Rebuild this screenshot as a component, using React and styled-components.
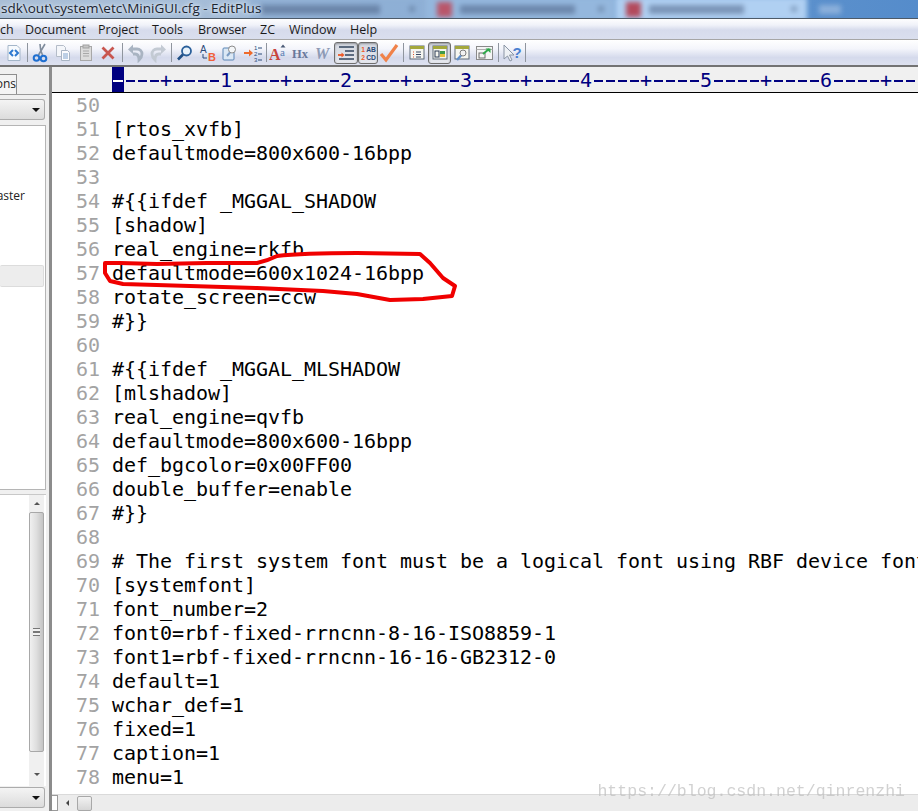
import React from "react";
import styled, { createGlobalStyle } from "styled-components";

const GlobalStyle = createGlobalStyle`
  html, body {
    margin: 0;
    padding: 0;
    background: #fff;
  }
`;

const Window = styled.div`
  position: relative;
  width: 918px;
  height: 811px;
  overflow: hidden;
  display: flex;
  flex-direction: column;
  font-family: "Open Sans", "Noto Sans", sans-serif;
`;

const TitleBar = styled.div`
  position: relative;
  height: 18px;
  flex: none;
  overflow: hidden;
  display: flex;
  background: linear-gradient(90deg, #a9bed6 0%, #a4bcd8 25%, #8fb3dc 60%, #5b90cc 88%, #558ccb 100%);
  border-bottom: 1px solid #4d5a68;
`;

const BlurTabs = styled.div`
  flex: 1;
  display: flex;
  align-items: center;
  padding-left: 250px;
  gap: 2px;
  filter: blur(2.4px);
`;

const BlurTab = styled.div`
  width: ${p => p.$w}px;
  height: 24px;
  flex: none;
  display: flex;
  align-items: center;
  gap: 8px;
  padding: 0 10px;
  box-sizing: border-box;
  background: ${p => p.$bg};
`;

const BlurFav = styled.div`
  width: 15px;
  height: 15px;
  flex: none;
  background: ${p => p.$c};
`;

const BlurText = styled.div`
  height: 9px;
  width: ${p => p.$w}px;
  flex: none;
  background: ${p => p.$c || "rgba(70, 90, 125, 0.5)"};
`;

const BlurClose = styled.div`
  width: 6px;
  height: 6px;
  flex: none;
  margin-left: auto;
  background: rgba(70, 90, 125, 0.4);
`;

const TitleText = styled.div`
  position: absolute;
  left: 1px;
  top: -1px;
  font-size: 13.5px;
  line-height: 18px;
  color: #1b2430;
  white-space: nowrap;
  text-shadow: 0 0 6px #e8f0f8, 0 0 3px #e8f0f8;
`;

const MenuBar = styled.div`
  height: 19px;
  flex: none;
  display: flex;
  align-items: center;
  background: linear-gradient(#fdfdfe 0%, #f0f2f9 30%, #d6dbec 55%, #dadfee 100%);
  border-bottom: 1px solid #a6a6a6;
  font-size: 12.5px;
  color: #1a1a1a;
  padding-top: 1px;
`;

const MenuItem = styled.span`
  width: ${p => p.$w}px;
  flex: none;
  white-space: nowrap;
`;

const Toolbar = styled.div`
  height: 25px;
  flex: none;
  display: flex;
  align-items: center;
  padding-left: 3px;
  background: linear-gradient(#ffffff 0%, #f4f5fb 35%, #d5daec 70%, #dde1ef 100%);
  border-bottom: 2px solid #737373;
`;

const ToolBtn = styled.div`
  width: ${p => p.$w || 22}px;
  height: 22px;
  flex: none;
  display: flex;
  align-items: center;
  justify-content: center;
  box-sizing: border-box;
  border-radius: 3px;
  ${p => p.$on && `
    border: 1px solid #6e6e6e;
    background: linear-gradient(#d4d8e0, #e6e8ee);
    box-shadow: inset 0 1px 2px rgba(0, 0, 0, 0.3);
  `}
`;

const ToolSep = styled.div`
  width: ${p => p.$w || 4}px;
  height: 19px;
  flex: none;
  display: flex;
  justify-content: center;
  &::after {
    content: "";
    width: 1px;
    background: #8f959e;
  }
`;

const Workspace = styled.div`
  flex: 1;
  min-height: 0;
  display: flex;
`;

const SidePanel = styled.div`
  width: 46px;
  flex: none;
  display: flex;
  flex-direction: column;
  background: #f0f0f0;
  padding: 7px 0 3px;
  box-sizing: border-box;
`;

const TabStrip = styled.div`
  height: 20px;
  flex: none;
  border-bottom: 1px solid #9a9a9a;
`;

const SideTab = styled.div`
  width: 17px;
  height: 20px;
  box-sizing: border-box;
  overflow: hidden;
  background: #f4f4f4;
  border-right: 1px solid #8e8e8e;
  border-top: 1px solid #8e8e8e;
  font-size: 12px;
  line-height: 17px;
  color: #222;
  display: flex;
  justify-content: flex-end;
`;

const Combo = styled.div`
  height: ${p => p.$h}px;
  flex: none;
  margin-top: ${p => p.$mt}px;
  margin-right: 1px;
  box-sizing: border-box;
  border: 1px solid #acacac;
  border-left: none;
  border-radius: 0 3px 3px 0;
  background: linear-gradient(#f4f4f4, #dcdcdc);
  display: flex;
  align-items: center;
  justify-content: flex-end;
  padding-right: 4px;
  &::after {
    content: "";
    border-left: 4px solid transparent;
    border-right: 4px solid transparent;
    border-top: 4px solid #111;
  }
`;

const ListPane = styled.div`
  height: 365px;
  flex: none;
  margin-top: 5px;
  background: #fff;
  border: 1px solid #b5b5b5;
  border-left: none;
  box-sizing: border-box;
  padding-top: 62px;
  display: flex;
  flex-direction: column;
`;

const ListText = styled.div`
  height: 18px;
  font-size: 12px;
  line-height: 16px;
  color: #222;
  overflow: hidden;
  display: flex;
  justify-content: flex-end;
  padding-right: 20px;
  white-space: nowrap;
`;

const ListSelected = styled.div`
  height: 20px;
  margin: 59px 1px 0 0;
  background: #ededed;
  border: 1px solid #dcdcdc;
  border-left: none;
  border-radius: 2px;
`;

const TreePane = styled.div`
  flex: 1;
  min-height: 0;
  margin-top: 4px;
  background: #fff;
  display: flex;
  justify-content: flex-end;
  padding-right: 2px;
  border-top: 1px solid #c8c8c8;
`;

const VScroll = styled.div`
  width: 15px;
  display: flex;
  flex-direction: column;
  align-items: center;
  background: #f0f0f0;
`;

const ScrollArrow = styled.div`
  height: 17px;
  flex: none;
  display: flex;
  align-items: center;
  justify-content: center;
  margin-bottom: ${p => (p.$up ? 0 : 3)}px;
  &::after {
    content: "";
    border-left: 3px solid transparent;
    border-right: 3px solid transparent;
    ${p => (p.$up ? "border-bottom: 3px solid #555;" : "border-top: 3px solid #555;")}
  }
`;

const VThumb = styled.div`
  height: 240px;
  flex: none;
  width: 15px;
  box-sizing: border-box;
  border: 1px solid #a8a8a8;
  border-radius: 2px;
  background: linear-gradient(90deg, #f0f0f0, #dedede 50%, #c4c4c4);
  display: flex;
  align-items: center;
  justify-content: center;
  &::after {
    content: "";
    width: 7px;
    height: 6px;
    border-top: 1px solid #777;
    border-bottom: 1px solid #777;
    background: linear-gradient(#f0f0f0 40%, #777 40%, #777 60%, #f0f0f0 60%);
  }
`;

const ScrollTrack = styled.div`
  flex: 1;
`;

const Splitter = styled.div`
  width: 6px;
  flex: none;
  box-sizing: border-box;
  background: #f0f0f0;
  border-right: 3px solid #8c8c8c;
`;

const Main = styled.div`
  flex: 1;
  min-width: 0;
  display: flex;
  flex-direction: column;
`;

const Ruler = styled.div`
  height: 26px;
  flex: none;
  display: flex;
  align-items: center;
  box-sizing: border-box;
  padding-left: 60px;
  background: #f0f0f0;
  border-bottom: 1px solid #000;
  font-family: "DejaVu Sans Mono", monospace;
  font-size: 20px;
  color: #000080;
  white-space: pre;
  overflow: hidden;
`;

const RulerCursor = styled.span`
  width: 12px;
  height: 25px;
  flex: none;
  background: #000080;
  display: flex;
  align-items: center;
  justify-content: center;
  &::after {
    content: "";
    width: 10px;
    height: 2px;
    margin-top: 2px;
    background: #fff;
  }
`;

const RulerCell = styled.span`
  width: 12px;
  flex: none;
  text-align: center;
`;

const RulerDash = styled.span`
  width: 12px;
  height: 2px;
  flex: none;
  margin-top: 2px;
  display: flex;
  justify-content: center;
  &::after {
    content: "";
    width: 9px;
    background: #000080;
  }
`;

const Editor = styled.div`
  position: relative;
  flex: 1;
  min-height: 0;
  overflow: hidden;
  background: #fff;
  font-family: "DejaVu Sans Mono", monospace;
  font-size: 20px;
`;

const Row = styled.div`
  height: 24px;
  display: flex;
  line-height: 24px;
  white-space: pre;
`;

const LineNo = styled.span`
  width: 60px;
  flex: none;
  box-sizing: border-box;
  padding-left: 24px;
  color: #a3a3a3;
`;

const Code = styled.span`
  color: #000;
  letter-spacing: -0.04px;
`;

const Mark = styled.svg`
  position: absolute;
  left: 0;
  top: 0;
  pointer-events: none;
`;

const HScroll = styled.div`
  height: 16px;
  flex: none;
  display: flex;
  align-items: center;
  background: #ececec;
  border-top: 1px solid #dadada;
`;

const HBox = styled.div`
  width: 6px;
  height: 16px;
  flex: none;
  box-sizing: border-box;
  background: #fff;
  border: 1px solid #9a9a9a;
  border-left: none;
`;

const HArrow = styled.div`
  width: 19px;
  flex: none;
  display: flex;
  justify-content: center;
  &::after {
    content: "";
    border-top: 3px solid transparent;
    border-bottom: 3px solid transparent;
    border-right: 3px solid #444;
  }
`;

const HThumb = styled.div`
  width: 15px;
  height: 15px;
  flex: none;
  box-sizing: border-box;
  border: 1px solid #a8a8a8;
  border-radius: 2px;
  background: linear-gradient(#f2f2f2, #d6d6d6);
`;

const Watermark = styled.div`
  position: absolute;
  right: 13px;
  bottom: 9px;
  font-family: "Liberation Mono", monospace;
  font-size: 16.55px;
  line-height: 20px;
  color: rgba(190, 190, 190, 0.7);
  white-space: nowrap;
  filter: blur(0.4px);
`;

const Ico = ({ children }) => (
  <svg width="20" height="20" viewBox="0 0 20 20" fill="none">
    {children}
  </svg>
);

const WinFrame = ({ children }) => (
  <>
    <rect x="3" y="3" width="14" height="13" fill="#f6f6f0" stroke="#5e6a78" />
    <rect x="3" y="3" width="14" height="3" fill="#a4a83c" />
    {children}
  </>
);

const Icons = {
  tags: (
    <Ico>
      <path d="M4 2.500h9l3 3v12H4z" fill="#f7fafd" stroke="#a4b6c9" />
      <path d="M9 7l-3 3 3 3M11 7l3 3-3 3" stroke="#2f7ad0" strokeWidth="2" />
    </Ico>
  ),
  cut: (
    <Ico>
      <path d="M15 1L8.500 12M10 1c0 4 1 8 2.500 11" stroke="#7f8c9c" strokeWidth="1.600" />
      <circle cx="6.500" cy="15" r="2.800" stroke="#1f6fd0" strokeWidth="2" />
      <circle cx="13.500" cy="15.500" r="2.800" stroke="#1f6fd0" strokeWidth="2" />
    </Ico>
  ),
  copy: (
    <Ico>
      <path d="M3.500 2.500h7l2 2v9h-9z" fill="#f4f6fa" stroke="#b4bcc8" />
      <path d="M8.500 7.500h6l2 2v8h-8z" fill="#fbfcfe" stroke="#a9b5c4" />
      <path d="M10 11h5M10 13h5M10 15h5" stroke="#7fa2cc" />
    </Ico>
  ),
  paste: (
    <Ico>
      <rect x="4.500" y="3.500" width="11" height="14" fill="#dcdcdc" stroke="#a8a8a8" />
      <rect x="7" y="2" width="6" height="3" fill="#c6c6c6" stroke="#a0a0a0" />
      <path d="M7 8h6M7 10.500h6M7 13h6" stroke="#a8a8a8" />
    </Ico>
  ),
  del: (
    <Ico>
      <path d="M4.500 4.500l11 11M15.500 4.500l-11 11" stroke="#c8564f" strokeWidth="2.800" />
    </Ico>
  ),
  undo: (
    <Ico>
      <path d="M6 6h5c3 0 5 2 5 5 0 2-1 4-3 6 0-3-1-6-4-6H7" stroke="#a9b4c2" strokeWidth="2.800" />
      <path d="M7 1.500L2 6.500 7 11z" fill="#a9b4c2" />
    </Ico>
  ),
  redo: (
    <Ico>
      <path d="M14 6H9C6 6 4 8 4 11c0 2 1 4 3 6 0-3 1-6 4-6h2" stroke="#c3cad3" strokeWidth="2.800" />
      <path d="M13 1.500l5 5-5 4.500z" fill="#c3cad3" />
    </Ico>
  ),
  find: (
    <Ico>
      <circle cx="11.500" cy="8" r="4.500" fill="#e8f2fb" stroke="#2a5f9a" strokeWidth="1.800" />
      <path d="M8 11.500L3 16.500" stroke="#1f4f86" strokeWidth="2.600" />
    </Ico>
  ),
  replace: (
    <Ico>
      <text x="2" y="10" fontSize="10" fontFamily="Liberation Sans" fill="#2b4a78">A</text>
      <path d="M5 11v4h4" stroke="#2b4a78" />
      <text x="10" y="18" fontSize="11" fontWeight="700" fontFamily="Liberation Sans" fill="#f0603a">B</text>
    </Ico>
  ),
  findFiles: (
    <Ico>
      <rect x="3" y="5" width="11" height="12" rx="1" fill="#dbe8f5" stroke="#5a85b5" />
      <circle cx="12" cy="6.500" r="3.500" fill="#f4f6f8" stroke="#8a8a8a" />
      <path d="M10 9.500l-3 3.500" stroke="#7a9bc2" strokeWidth="2" />
    </Ico>
  ),
  gotoLine: (
    <Ico>
      <path d="M1 10h6" stroke="#ee6a2c" strokeWidth="2" />
      <path d="M6 6.500l4 3.500-4 3.500z" fill="#ee6a2c" />
      <text x="11" y="7" fontSize="6" fontFamily="Liberation Sans" fill="#2b4a78">1</text>
      <text x="11" y="13" fontSize="6" fontFamily="Liberation Sans" fill="#2b4a78">2</text>
      <text x="11" y="19" fontSize="6" fontFamily="Liberation Sans" fill="#2b4a78">3</text>
      <path d="M15 5h4M15 11h4M15 17h4" stroke="#2b4a78" />
    </Ico>
  ),
  fontSize: (
    <Ico>
      <text x="0" y="17" fontSize="16" fontWeight="700" fontFamily="Liberation Serif" fill="#c8443c">A</text>
      <text x="11" y="13" fontSize="11" fontFamily="Liberation Serif" fill="#5a7fb5">a</text>
      <path d="M11.500 4.500L14 1.500l2.500 3z" fill="#4a5a75" />
    </Ico>
  ),
  hex: (
    <Ico>
      <text x="1" y="15" fontSize="12.500" fontWeight="700" fontFamily="Liberation Serif" fill="#69789a">Hx</text>
    </Ico>
  ),
  word: (
    <Ico>
      <text x="2" y="16" fontSize="16" fontWeight="700" fontStyle="italic" fontFamily="Liberation Serif" fill="#8d9ab5">W</text>
    </Ico>
  ),
  wrap: (
    <Ico>
      <path d="M3 4h15M9 8h9M9 12h9M3 16h15" stroke="#33455f" strokeWidth="1.300" />
      <path d="M2 12h4" stroke="#ee5a28" strokeWidth="1.800" />
      <path d="M5.500 9.500l3 2.500-3 2.500z" fill="#ee5a28" />
    </Ico>
  ),
  lineNums: (
    <Ico>
      <text x="2.500" y="9" fontSize="7.500" fontWeight="700" fontFamily="Liberation Sans" fill="#ee5a28">1</text>
      <text x="2.500" y="17.500" fontSize="7.500" fontWeight="700" fontFamily="Liberation Sans" fill="#ee5a28">2</text>
      <text x="8" y="9" fontSize="7.500" fontWeight="700" fontFamily="Liberation Sans" fill="#2b4a78">AB</text>
      <text x="8" y="17.500" fontSize="7.500" fontWeight="700" fontFamily="Liberation Sans" fill="#2b4a78">CD</text>
    </Ico>
  ),
  check: (
    <Ico>
      <path d="M2 11l5 6L18 2" stroke="#f0824a" strokeWidth="3.200" />
    </Ico>
  ),
  panelList: (
    <Ico>
      <WinFrame>
        <path d="M6 9h1M6 11.500h1M6 14h1" stroke="#e0552a" />
        <path d="M9 9h5M9 11.500h5M9 14h5" stroke="#3a4a64" />
      </WinFrame>
    </Ico>
  ),
  panelGrid: (
    <Ico>
      <WinFrame>
        <rect x="5" y="8" width="4" height="6" stroke="#2b3a55" />
        <rect x="10" y="8" width="5" height="3" fill="#3f9a4a" />
        <rect x="10" y="11" width="5" height="3" fill="#e8c23a" />
      </WinFrame>
    </Ico>
  ),
  panelFind: (
    <Ico>
      <WinFrame>
        <circle cx="11" cy="10" r="3" stroke="#7d7d7d" fill="#f2f2f2" />
        <path d="M9 12.500l-4 4.500" stroke="#5f8fcb" strokeWidth="2.400" />
      </WinFrame>
    </Ico>
  ),
  panelOut: (
    <Ico>
      <rect x="1.500" y="3.500" width="16" height="13" fill="#f5f5f5" stroke="#8a8a8a" />
      <path d="M1.500 6.500h16" stroke="#b0b0b0" />
      <rect x="4" y="10" width="6" height="5" stroke="#6a6a6a" />
      <path d="M8 11l6-5" stroke="#2fa84a" strokeWidth="2" />
      <path d="M10.500 5.500h5v4.500z" fill="#2fa84a" />
    </Ico>
  ),
  help: (
    <Ico>
      <path d="M2 2v14l3.500-3 2.500 5 2-1-2.500-5H12z" fill="#eef1f5" stroke="#8a95a5" />
      <text x="10.500" y="15" fontSize="15" fontWeight="700" fontFamily="Liberation Sans" fill="#4a7fd0">?</text>
    </Ico>
  ),
};

const toolbarItems = [
  ["tags"], ["sep", 4], ["cut"], ["copy", 24], ["paste"], ["del"], ["sep", 6],
  ["undo"], ["redo"], ["sep", 5], ["find"], ["replace", 23], ["findFiles"], ["gotoLine", 23], ["sep", 4],
  ["fontSize"], ["hex"], ["word"], ["wrap", 24, true], ["lineNums", 20, true], ["check", 22], ["sep", 6],
  ["panelList"], ["panelGrid", 23, true], ["panelFind"], ["panelOut", 23], ["sep", 5],
  ["help"], ["sep", 4],
];

const menus = [
  ["ch", 25], ["Document", 73], ["Project", 54], ["Tools", 46], ["Browser", 62],
  ["ZC", 29], ["Window", 61], ["Help", 40],
];

const lines = [
  "", "[rtos_xvfb]", "defaultmode=800x600-16bpp", "", "#{{ifdef _MGGAL_SHADOW", "[shadow]",
  "real_engine=rkfb", "defaultmode=600x1024-16bpp", "rotate_screen=ccw", "#}}", "",
  "#{{ifdef _MGGAL_MLSHADOW", "[mlshadow]", "real_engine=qvfb", "defaultmode=800x600-16bpp",
  "def_bgcolor=0x00FF00", "double_buffer=enable", "#}}", "",
  "# The first system font must be a logical font using RBF device font.",
  "[systemfont]", "font_number=2", "font0=rbf-fixed-rrncnn-8-16-ISO8859-1",
  "font1=rbf-fixed-rrncnn-16-16-GB2312-0", "default=1", "wchar_def=1", "fixed=1", "caption=1", "menu=1",
];

const rulerMarks = "---+----1----+----2----+----3----+----4----+----5----+----6----+----";

// hand drawn circle round line 57, coordinates relative to the editor (x-52, y-92)
const circlePath =
  "M53 170 L68 170 L105 171 L155 170 L205 170 Q215 168 225 163 Q250 160 305 160 " +
  "L368 161 L378 170 L391 185 L403 193 L400 203 L371 206 L338 207 L305 201 L271 198 " +
  "L205 195 L138 193 L71 191 L58 188 L53 180 Z";

const App = () => (
  <Window>
    <GlobalStyle />
    <TitleBar>
      <BlurTabs>
        <BlurTab $w={175} $bg="rgba(135, 170, 210, 0.6)">
          <BlurText $w={120} />
          <BlurClose />
        </BlurTab>
        <BlurTab $w={187} $bg="#94b7dd">
          <BlurFav $c="#b9566a" />
          <BlurText $w={115} />
          <BlurClose />
        </BlurTab>
        <BlurTab $w={191} $bg="#b0d0f2">
          <BlurFav $c="#b34a5c" />
          <BlurText $w={95} />
          <BlurClose />
        </BlurTab>
        <BlurTab $w={40} $bg="transparent">
          <BlurText $w={22} $c="rgba(190, 210, 235, 0.5)" />
        </BlurTab>
      </BlurTabs>
      <TitleText>sdk\out\system\etc\MiniGUI.cfg - EditPlus</TitleText>
    </TitleBar>

    <MenuBar>
      {menus.map(([label, w]) => (
        <MenuItem key={label} $w={w}>{label}</MenuItem>
      ))}
    </MenuBar>

    <Toolbar>
      {toolbarItems.map(([name, w, on], i) =>
        name === "sep" ? (
          <ToolSep key={i} $w={w} />
        ) : (
          <ToolBtn key={i} $w={w} $on={on}>{Icons[name]}</ToolBtn>
        )
      )}
    </Toolbar>

    <Workspace>
      <SidePanel>
        <TabStrip>
          <SideTab>ons</SideTab>
        </TabStrip>
        <Combo $h={21} $mt={4} />
        <ListPane>
          <ListText>aster</ListText>
          <ListSelected />
        </ListPane>
        <TreePane>
          <VScroll>
            <ScrollArrow $up />
            <VThumb />
            <ScrollTrack />
            <ScrollArrow />
          </VScroll>
        </TreePane>
        <Combo $h={21} $mt={1} />
      </SidePanel>
      <Splitter />
      <Main>
        <Ruler>
          <RulerCursor />
          {[...rulerMarks].map((ch, i) =>
            ch === "-" ? <RulerDash key={i} /> : <RulerCell key={i}>{ch}</RulerCell>
          )}
        </Ruler>
        <Editor>
          {lines.map((text, i) => (
            <Row key={i}>
              <LineNo>{50 + i}</LineNo>
              <Code>{text}</Code>
            </Row>
          ))}
          <Mark width="866" height="400" viewBox="0 0 866 400" fill="none">
            <path d={circlePath} stroke="#f00000" strokeWidth="4" strokeLinejoin="round" />
          </Mark>
        </Editor>
        <HScroll>
          <HBox />
          <HArrow />
          <HThumb />
        </HScroll>
      </Main>
    </Workspace>
    <Watermark>https://blog.csdn.net/qinrenzhi</Watermark>
  </Window>
);

export default App;
